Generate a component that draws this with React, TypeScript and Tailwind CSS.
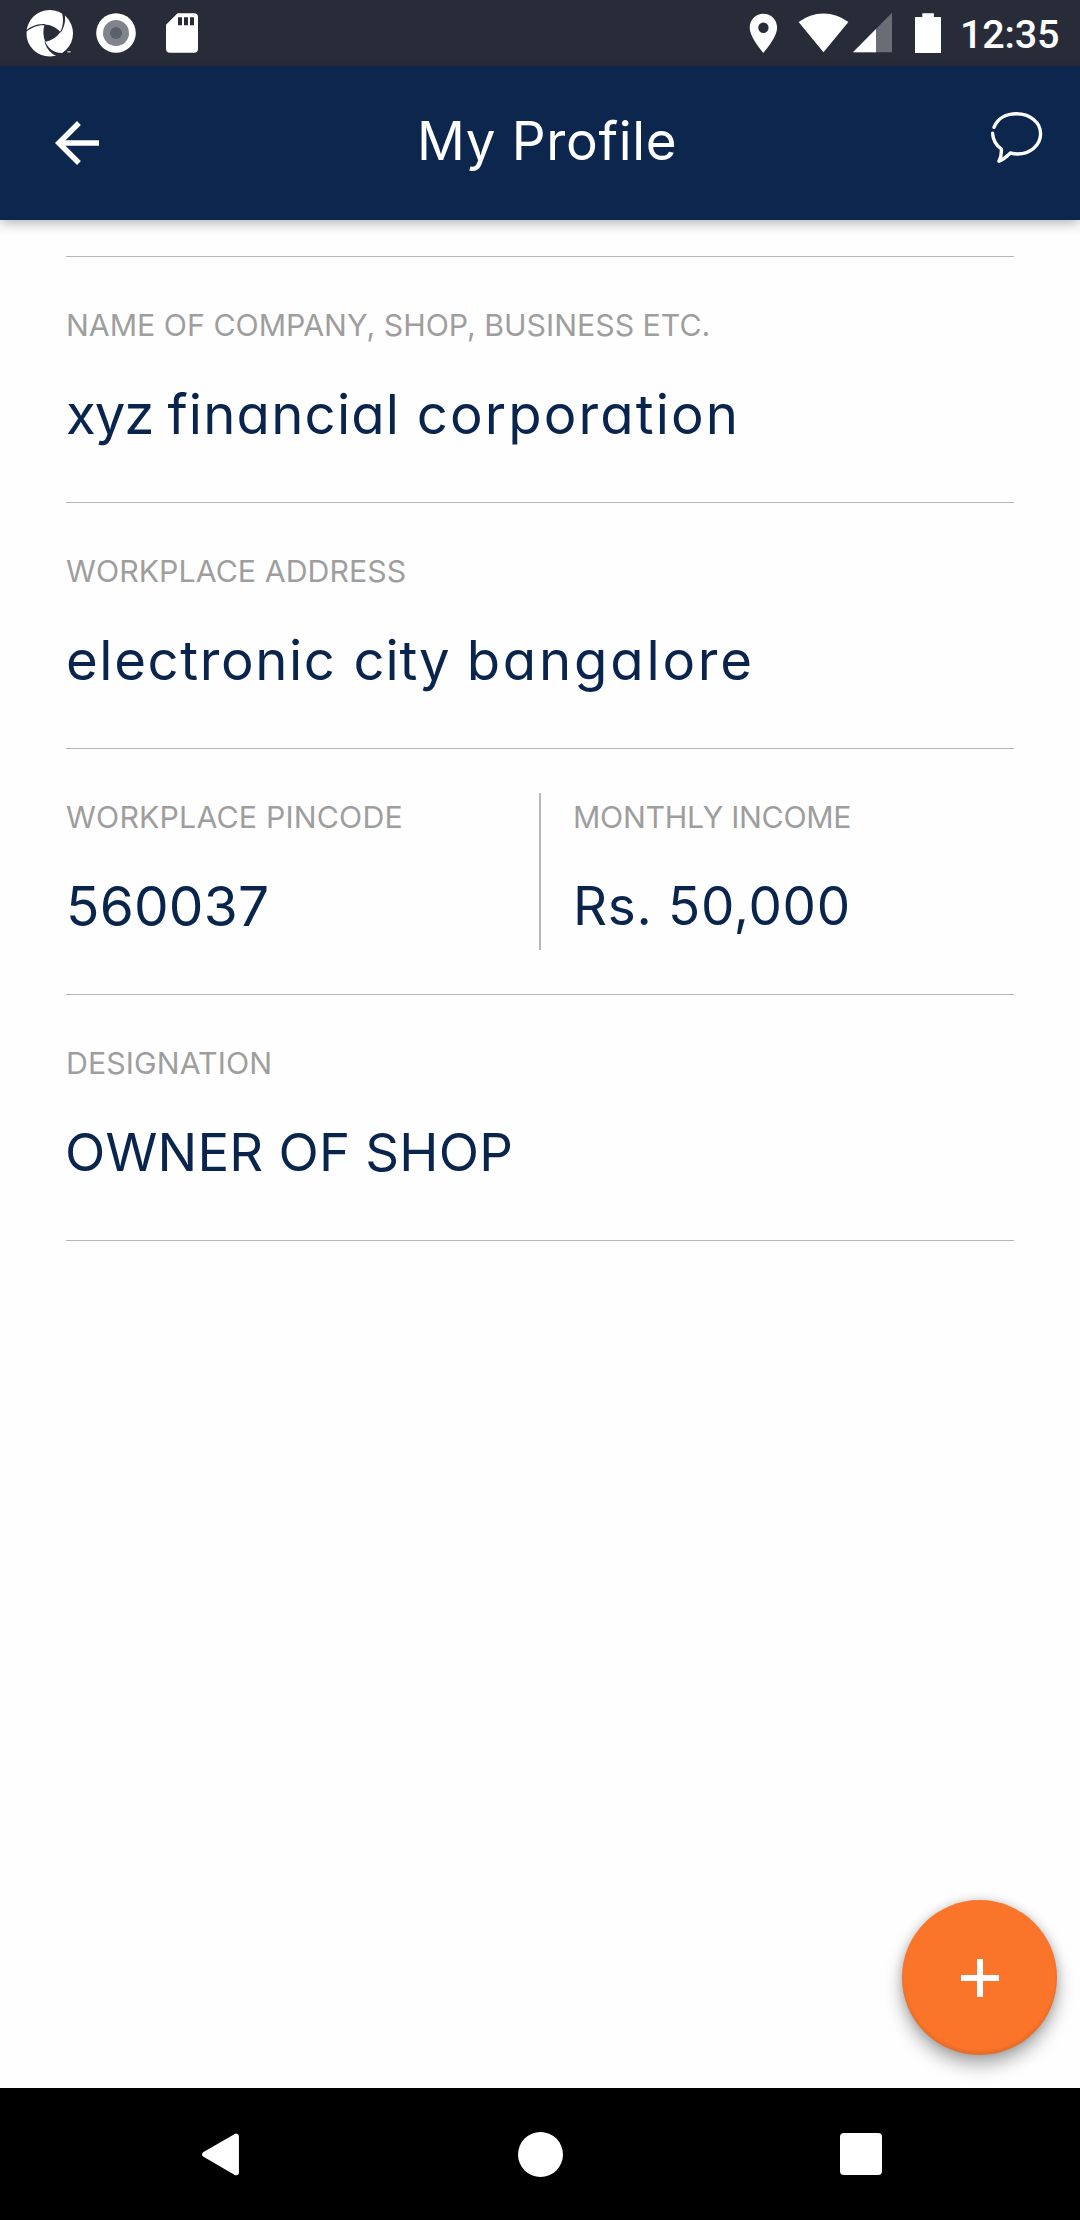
import type { ReactNode } from "react";

const INTER = "font-['Inter',sans-serif] [font-feature-settings:'cv11']";

function StatusBar() {
  return (
    <div className="flex h-[66px] shrink-0 items-stretch bg-[#282c38] pl-6 text-white">
      <svg viewBox="24 0 54 66" className="h-[66px] w-[54px]">
        <circle cx="49.7" cy="33.3" r="23.3" fill="#fff" />
        <g fill="#282c38" stroke="none">
          <path d="M44.6 24.4C50.5 24.6 56.5 27.4 60.4 32C57 37 51.5 40.6 45.2 41.8C43 36 42.8 30 44.6 24.4Z" />
          <path d="M24 32.5C30 26.5 37 23.6 45.2 24.2L45 25.4C38 24.8 32 27.6 26.4 31.6L26 37Z" />
          <path d="M60 32C63 27 64.2 20 61.4 10.2L64.6 13.4C66 21 64.4 27 60.8 32.4Z" />
          <path d="M45 41.2C47.6 48 54.5 53.8 63 52.9L67 51.8L62.6 55.4L57.2 56.2C51.5 54.2 46.8 49.6 44.6 42Z" />
        </g>
        <path d="M67.4 51.8h3.2" stroke="#c8cad0" strokeWidth="1.4" />
      </svg>
      <svg viewBox="78 0 70 66" className="h-[66px] w-[70px]">
        <circle cx="116" cy="33" r="19.8" fill="#fff" />
        <circle cx="116" cy="33" r="13" fill="#80848c" />
        <circle cx="116" cy="33" r="6" fill="#5c6069" />
      </svg>
      <svg viewBox="148 0 60 66" className="h-[66px] w-[60px]">
        <path d="M177.5 13.2H194a4 4 0 0 1 4 4V48.7a4 4 0 0 1-4 4H170a4 4 0 0 1-4-4V24.8Z" fill="#fff" />
        <path d="M178 17.3h4v8h-4zM184 17.3h4v8h-4zM190 17.3h4v8h-4z" fill="#282c38" />
      </svg>
      <svg viewBox="740 0 47 66" className="ml-auto h-[66px] w-[47px]">
        <path
          d="M763.4 13.8c-7.6 0-13.7 6.1-13.7 13.7 0 10.2 13.7 25.4 13.7 25.4s13.7-15.2 13.7-25.4c0-7.6-6.1-13.7-13.7-13.7zm0 19.2a5.2 5.2 0 1 1 0-10.4 5.2 5.2 0 0 1 0 10.4z"
          fill="#fff"
        />
      </svg>
      <svg viewBox="787 0 64 66" className="h-[66px] w-[64px]">
        <path d="M798.6 22.1A40.5 40.5 0 0 1 848.4 22.1L823.5 52.2Z" fill="#fff" />
      </svg>
      <svg viewBox="851 0 50 66" className="h-[66px] w-[50px]">
        <path d="M853 52.2L892 12.8V52.2Z" fill="#6a6d76" />
        <path d="M853 52.2L876 29V52.2Z" fill="#fff" />
      </svg>
      <svg viewBox="901 0 59 66" className="h-[66px] w-[59px]">
        <path d="M922.3 13.2h11.6v3.9h7.1v35.8h-26V17.1h7.3z" fill="#fff" />
      </svg>
      <div className="w-[120px] pt-[11px] font-['Roboto',sans-serif] text-[39.5px] leading-[48px] font-medium tracking-[-0.2px]">
        12:35
      </div>
    </div>
  );
}

function Header() {
  return (
    <header className="relative flex h-[154px] shrink-0 items-center bg-[#0d264e] px-[38px] text-white shadow-[0_3px_12px_rgba(0,0,0,0.3)]">
      <svg viewBox="0 0 24 24" className="ml-[6px] size-[66px]" fill="currentColor">
        <path d="M20 11H7.83l5.59-5.59L12 4l-8 8 8 8 1.41-1.41L7.83 13H20v-2z" />
      </svg>
      <h1 className={`mb-[4px] ml-[307px] text-[53px] leading-[60px] tracking-[0.67px] ${INTER}`}>My Profile</h1>
      <svg
        viewBox="988 108 58 58"
        className="-mt-[12px] -mr-[4px] ml-auto size-[58px]"
        fill="none"
        stroke="currentColor"
        strokeWidth="3.4"
        strokeLinecap="round"
        strokeLinejoin="round"
      >
        <path d="M994 127.3C997.5 118.5 1006 113.8 1016.5 113.8C1030 113.8 1040.6 122.5 1040.6 133.8C1040.6 145.3 1030 154 1017.5 154C1015 154 1012.7 153.6 1010.4 153C1006.8 156.6 1003 159.6 998.9 161.2C1001.2 157.2 1001.6 153 1001.4 149C996.2 145.2 992.8 139.6 992.6 133.2" />
      </svg>
    </header>
  );
}

function Field({ label, value, labelClass = "", valueClass = "" }: { label: string; value: ReactNode; labelClass?: string; valueClass?: string }) {
  return (
    <div className={`pt-12 whitespace-nowrap ${INTER}`}>
      <div className={`text-[30.3px] leading-10 text-[#9e9e9e] ${labelClass}`}>{label}</div>
      <div className={`mt-[39px] leading-[60px] text-[#09244d] ${valueClass}`}>{value}</div>
    </div>
  );
}

function Row({ children }: { children: ReactNode }) {
  return <section className="flex h-[246px] border-b border-[#b5b5b5]">{children}</section>;
}

function NavBar() {
  return (
    <nav className="flex h-[132px] shrink-0 items-center justify-between bg-black px-[198px]">
      <svg viewBox="0 0 46 50" className="size-[46px]" fill="#fff" stroke="#fff" strokeWidth="6" strokeLinejoin="round">
        <path d="M5.5 25.5L39.5 5.8V45.2Z" />
      </svg>
      <div className="-ml-[3px] size-[45px] rounded-full bg-white" />
      <div className="size-[42px] rounded-[4px] bg-white" />
    </nav>
  );
}

export default function App() {
  return (
    <div className="relative flex h-[2220px] w-[1080px] flex-col overflow-hidden bg-[#fefefe]">
      <StatusBar />
      <Header />
      <main className="flex-1 px-[66px] pt-9">
        <div className="border-t border-[#b5b5b5]">
          <Row>
            <Field
              label="NAME OF COMPANY, SHOP, BUSINESS ETC."
              value={
                <>
                  <span className="tracking-[-1.1px]">xyz </span>
                  <span className="tracking-[1.2px]">financial </span>
                  <span className="tracking-[2.1px]">corporation</span>
                </>
              }
              valueClass="-mt-px mt-[38px] text-[54.5px]"
            />
          </Row>
          <Row>
            <Field
              label="WORKPLACE ADDRESS"
              value={
                <>
                  <span className="tracking-[1.6px]">electronic </span>
                  <span className="tracking-[0.8px]">city </span>
                  <span className="tracking-[2.8px]">bangalore</span>
                </>
              }
              labelClass="tracking-[0.06px]"
              valueClass="text-[54.5px]"
            />
          </Row>
          <Row>
            <div className="w-[473px]">
              <Field
                label="WORKPLACE PINCODE"
                value="560037"
                labelClass="tracking-[0.18px]"
                valueClass="text-[55px] tracking-[0.2px]"
              />
            </div>
            <div className="mt-11 h-[157px] w-[2px] bg-[#b8b8b8]" />
            <div className="pl-8">
              <Field
                label="MONTHLY INCOME"
                value="Rs. 50,000"
                labelClass="tracking-[-0.3px]"
                valueClass="text-[53px] tracking-[0.7px]"
              />
            </div>
          </Row>
          <Row>
            <Field
              label="DESIGNATION"
              value="OWNER OF SHOP"
              labelClass="tracking-[0.1px]"
              valueClass="-ml-px text-[52.7px] tracking-[0.2px]"
            />
          </Row>
        </div>
      </main>
      <button className="absolute right-[23px] bottom-[165px] flex size-[155px] items-center justify-center rounded-full bg-[#fa742a] shadow-[0_10px_18px_rgba(0,0,0,0.32),0_0_10px_rgba(0,0,0,0.16),inset_0_-3px_3px_rgba(0,0,0,0.08)]">
        <svg viewBox="0 0 38 38" className="size-[38px]" fill="#fff">
          <path d="M16 0h6v16h16v6H22v16h-6V22H0v-6h16z" />
        </svg>
      </button>
      <NavBar />
    </div>
  );
}
